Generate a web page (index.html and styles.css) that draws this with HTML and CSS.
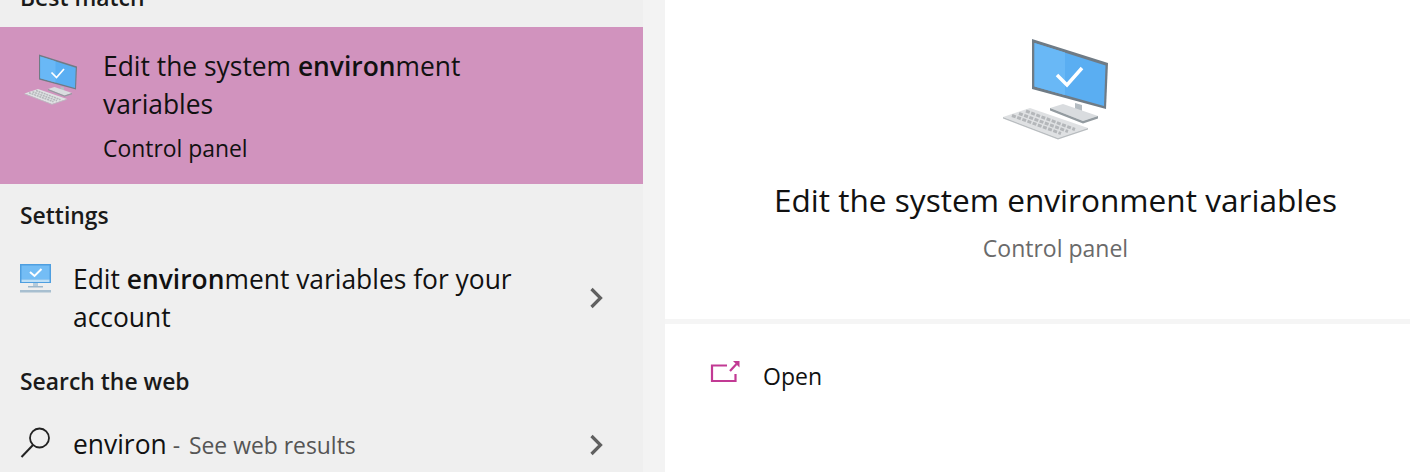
FILE: index.html
```html
<!DOCTYPE html>
<html lang="en">
<head>
<meta charset="utf-8">
<title>Search</title>
<link rel="stylesheet" href="styles.css">
</head>
<body>
<div class="app">
  <section class="results">
    <div class="heading heading-top">Best match</div>
    <div class="best">
      <svg class="pc-small" viewBox="0 0 160 130" aria-hidden="true">
        <use href="#pc"/>
      </svg>
      <div class="best-text">
        <div class="title">Edit the system <b>environ</b>ment<br>variables</div>
        <div class="sub">Control panel</div>
      </div>
    </div>
    <div class="heading heading-settings">Settings</div>
    <div class="row row-settings">
      <svg class="monitor" viewBox="0 0 32 30" aria-hidden="true">
        <rect x="0" y="0" width="31" height="19" fill="#4f9fe0"/>
        <rect x="1.500" y="1.500" width="28" height="14" fill="#74bdf5"/>
        <rect x="1.500" y="15.500" width="28" height="2.500" fill="#bfe0f7"/>
        <path d="M10 8l4.500 4 7-7" fill="none" stroke="#fff" stroke-width="2"/>
        <rect x="13" y="19" width="5" height="3" fill="#b5cbdb"/>
        <rect x="8" y="22" width="15" height="1.500" fill="#9db8cc"/>
        <rect x="0" y="26" width="31" height="2.500" fill="#a8bfd0"/>
      </svg>
      <div class="row-text">Edit <b>environ</b>ment variables for your<br>account</div>
      <svg class="chev" viewBox="0 0 16 24" aria-hidden="true"><path d="M2.500 3l9 9-9 9" fill="none" stroke="#606060" stroke-width="3.200"/></svg>
    </div>
    <div class="heading heading-web">Search the web</div>
    <div class="row row-web">
      <svg class="search" viewBox="0 0 32 32" aria-hidden="true">
        <circle cx="19.500" cy="12" r="9.500" fill="none" stroke="#222" stroke-width="1.800"/>
        <path d="M13 19L1.500 31" fill="none" stroke="#222" stroke-width="2"/>
      </svg>
      <div class="row-text">environ<span class="see"> - <span class="see-text">See web results</span></span></div>
      <svg class="chev" viewBox="0 0 16 24" aria-hidden="true"><path d="M2.500 3l9 9-9 9" fill="none" stroke="#606060" stroke-width="3.200"/></svg>
    </div>
  </section>
  <section class="detail">
    <div class="hero">
      <svg class="pc-large" viewBox="0 0 160 130" aria-hidden="true">
        <defs>
          <g id="pc">
            <path d="M52 19L128 43L126 89L52 69Z" fill="#6f7b85"/>
            <path d="M54.500 23L125.500 45.500L124 86L54.500 66.500Z" fill="#5aaef2"/>
            <path d="M54.500 23L85 32.500V75L54.500 66.500Z" fill="#69b8f6"/>
            <path d="M77 55l10 10 15-17" fill="none" stroke="#fff" stroke-width="3.500"/>
            <path d="M95 83L102 85V92L95 90Z" fill="#b4bcc2"/>
            <path d="M70 88L83 84L118 96L103 101Z" fill="#d9dcdf"/>
            <path d="M70 88L103 101L118 96V98.500L103 103.500L70 90.500Z" fill="#939ba0"/>
            <path d="M23 97L50 88L108 108L78 118Z" fill="#dfe1e3"/>
            <path d="M32 95.500L81 113.500M39 93.500L88 111.500M46 91L95 109.500" fill="none" stroke="#b4b7ba" stroke-width="3" stroke-dasharray="4 1.500"/>
            <path d="M23 97L78 118L108 108V109.500L78 119.500L23 98.500Z" fill="#b9bdc0"/>
          </g>
        </defs>
        <use href="#pc"/>
      </svg>
      <div class="hero-title">Edit the system environment variables</div>
      <div class="hero-sub">Control panel</div>
    </div>
    <div class="actions">
      <div class="action">
        <svg class="open-icon" viewBox="0 0 30 24" aria-hidden="true">
          <path d="M17 6.500H2V22H25.500V15" fill="none" stroke="#c23a94" stroke-width="2.200"/>
          <path d="M20 12L26.500 5" fill="none" stroke="#c23a94" stroke-width="2.200"/>
          <path d="M23 2H29.500V8.500Z" fill="#c23a94"/>
        </svg>
        <span>Open</span>
      </div>
    </div>
  </section>
</div>
</body>
</html>
```
FILE: styles.css
```css
html, body {
  margin: 0;
  padding: 0;
  width: 1410px;
  height: 472px;
  overflow: hidden;
  background: #f3f3f3;
  font-family: "Open Sans", "Noto Sans", sans-serif;
  color: #111;
}
.app {
  display: flex;
  gap: 22px;
  height: 472px;
}
.results {
  width: 643px;
  height: 472px;
  background: #efefef;
  overflow: hidden;
  flex: none;
}
.heading {
  font-size: 22.900px;
  line-height: 30px;
  font-weight: 600;
  padding-left: 20px;
  color: #1a1a1a;
}
.heading-top { margin-top: -17px; height: 44px; }
.heading-settings { margin-top: 17px; }
.heading-web { margin-top: 31px; }
.best {
  height: 157px;
  background: #d193be;
  display: flex;
  align-items: flex-start;
}
.pc-small {
  width: 80px;
  height: 65px;
  margin: 18px 0 0 13px;
  flex: none;
  filter: blur(0.4px);
}
.best-text { margin: 20px 0 0 10px; }
.title {
  font-size: 26.400px;
  line-height: 38px;
  color: #111;
}
.sub {
  font-size: 22.900px;
  line-height: 30px;
  margin-top: 11px;
}
b { font-weight: 600; }
.row {
  display: flex;
  align-items: flex-start;
}
.row-settings { height: 76px; margin-top: 29px; }
.row-web { height: 50px; margin-top: 28px; }
.monitor {
  width: 32px;
  height: 30px;
  margin: 4px 0 0 20px;
  flex: none;
  filter: blur(0.4px);
}
.search {
  width: 32px;
  height: 32px;
  margin: 1px 0 0 20px;
  flex: none;
}
.row-text {
  font-size: 26.400px;
  line-height: 38px;
  margin-left: 21px;
  flex: 1;
}
.see { font-size: 22.900px; color: #555; }
.see-text { margin-left: 3px; }
.chev {
  width: 16px;
  height: 24px;
  flex: none;
  margin: 26px 38px 0 0;
}
.row-web .chev { margin-top: 8px; }
.detail {
  flex: 1;
  background: #fff;
  display: flex;
  flex-direction: column;
}
.hero {
  height: 319px;
  border-bottom: 5px solid #f5f5f5;
  display: flex;
  flex-direction: column;
  align-items: center;
  padding-left: 36px;
}
.pc-large {
  width: 160px;
  height: 130px;
  margin-top: 20px;
  align-self: flex-start;
  margin-left: 279px;
  filter: blur(0.5px);
}
.hero-title {
  font-size: 31.600px;
  line-height: 42px;
  margin-top: 29px;
  color: #111;
}
.hero-sub {
  font-size: 23px;
  line-height: 30px;
  margin-top: 12px;
  color: #6a6a6a;
}
.actions { padding: 34px 0 0 45px; }
.action {
  display: flex;
  align-items: center;
  gap: 23px;
  font-size: 23px;
  line-height: 36px;
}
.open-icon { width: 30px; height: 24px; margin-top: -10px; flex: none; }
```
